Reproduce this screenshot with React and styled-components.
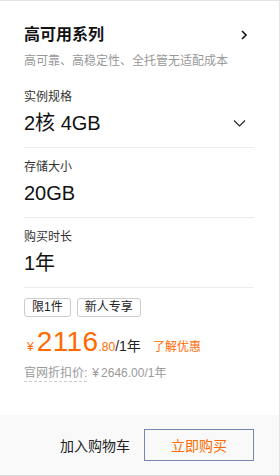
import React from "react";
import styled, { createGlobalStyle } from "styled-components";

const Global = createGlobalStyle`
  html, body {
    margin: 0;
    padding: 0;
    background: #fff;
  }
  * {
    box-sizing: border-box;
  }
`;

const ORANGE = "#ff6a00";

const Card = styled.div`
  width: 280px;
  height: 476px;
  display: flex;
  flex-direction: column;
  border-top: 1px solid #e3e3e3;
  border-right: 1px solid #e3e3e3;
  border-bottom: 1px solid #d9d9d9;
  font-family: "Liberation Sans", "Noto Sans CJK SC", sans-serif;
  color: #222;
  background: #fff;
`;

const Main = styled.div`
  flex: 1;
  padding: 22px 25px 0 24px;
`;

const Header = styled.div`
  display: flex;
  flex-direction: column;
`;

const TitleRow = styled.div`
  display: flex;
  align-items: center;
  justify-content: space-between;
`;

const Title = styled.div`
  font-size: 16px;
  line-height: 24px;
  font-weight: 600;
  color: #111;
`;

const Sub = styled.div`
  margin-top: 5px;
  font-size: 12px;
  line-height: 18px;
  color: #999;
`;

const Section = styled.div`
  padding: ${(p) => (p.$first ? "18px" : "10px")} 0 10px;
  border-bottom: ${(p) => (p.$last ? "none" : "1px solid #ebebeb")};
`;

const Label = styled.div`
  font-size: 12px;
  line-height: 18px;
  color: #333;
`;

const ValueRow = styled.div`
  margin-top: 3px;
  display: flex;
  align-items: center;
  justify-content: space-between;
`;

const Value = styled.div`
  font-size: 20px;
  line-height: 28px;
  color: #111;
`;

const Tags = styled.div`
  display: flex;
  gap: 6px;
`;

const Tag = styled.span`
  display: inline-block;
  height: 19px;
  padding: 0 7px;
  border: 1px solid #ccc;
  border-radius: 3px;
  font-size: 12px;
  line-height: 17px;
  color: #222;
`;

const PriceRow = styled.div`
  margin-top: 9px;
  display: flex;
  align-items: baseline;
  line-height: 32px;
`;

const Yen = styled.span`
  font-size: 12px;
  color: ${ORANGE};
  margin: 0 3px 0 3px;
`;

const Big = styled.span`
  font-size: 28px;
  letter-spacing: 0.4px;
  color: ${ORANGE};
`;

const Cents = styled.span`
  font-size: 12px;
  color: ${ORANGE};
`;

const Per = styled.span`
  font-size: 14px;
  color: #222;
`;

const Promo = styled.span`
  margin-left: 12px;
  font-size: 12px;
  color: ${ORANGE};
`;

const Official = styled.div`
  margin-top: 1px;
  font-size: 12px;
  line-height: 18px;
  color: #999;
`;

const Dashed = styled.span`
  border-bottom: 1px dashed #ccc;
  padding-bottom: 1px;
  margin-right: 5px;
`;

const OfficialYen = styled.span`
  margin-right: 2px;
`;

const Footer = styled.div`
  height: 60px;
  background: #f9f9f9;
  display: flex;
  align-items: center;
  justify-content: flex-end;
  gap: 14px;
  padding-right: 25px;
`;

const CartLink = styled.span`
  font-size: 14px;
  color: #222;
`;

const BuyButton = styled.button`
  width: 110px;
  height: 32px;
  border: 1px solid #7388b0;
  background: transparent;
  color: ${ORANGE};
  font-family: inherit;
  font-size: 14px;
  padding: 0;
  cursor: pointer;
`;

const ChevronRight = () => (
  <svg width="8" height="10" viewBox="0 0 8 10" style={{ marginRight: 6 }}>
    <path d="M2 1 L6 5 L2 9" fill="none" stroke="#111" strokeWidth="1.6" />
  </svg>
);

const ChevronDown = () => (
  <svg width="13" height="8" viewBox="0 0 13 8" style={{ marginRight: 8 }}>
    <path d="M1 1.5 L6.5 7 L12 1.5" fill="none" stroke="#222" strokeWidth="1.1" />
  </svg>
);

export default function App() {
  return (
    <>
      <Global />
      <Card>
        <Main>
          <Header>
            <TitleRow>
              <Title>高可用系列</Title>
              <ChevronRight />
            </TitleRow>
            <Sub>高可靠、高稳定性、全托管无适配成本</Sub>
          </Header>
          <Section $first>
            <Label>实例规格</Label>
            <ValueRow>
              <Value>2核 4GB</Value>
              <ChevronDown />
            </ValueRow>
          </Section>
          <Section>
            <Label>存储大小</Label>
            <ValueRow>
              <Value>20GB</Value>
            </ValueRow>
          </Section>
          <Section>
            <Label>购买时长</Label>
            <ValueRow>
              <Value>1年</Value>
            </ValueRow>
          </Section>
          <Section $last>
            <Tags>
              <Tag>限1件</Tag>
              <Tag>新人专享</Tag>
            </Tags>
            <PriceRow>
              <Yen>¥</Yen>
              <Big>2116</Big>
              <Cents>.80</Cents>
              <Per>/1年</Per>
              <Promo>了解优惠</Promo>
            </PriceRow>
            <Official>
              <Dashed>官网折扣价:</Dashed>
              <OfficialYen>¥</OfficialYen>2646.00/1年
            </Official>
          </Section>
        </Main>
        <Footer>
          <CartLink>加入购物车</CartLink>
          <BuyButton>立即购买</BuyButton>
        </Footer>
      </Card>
    </>
  );
}
